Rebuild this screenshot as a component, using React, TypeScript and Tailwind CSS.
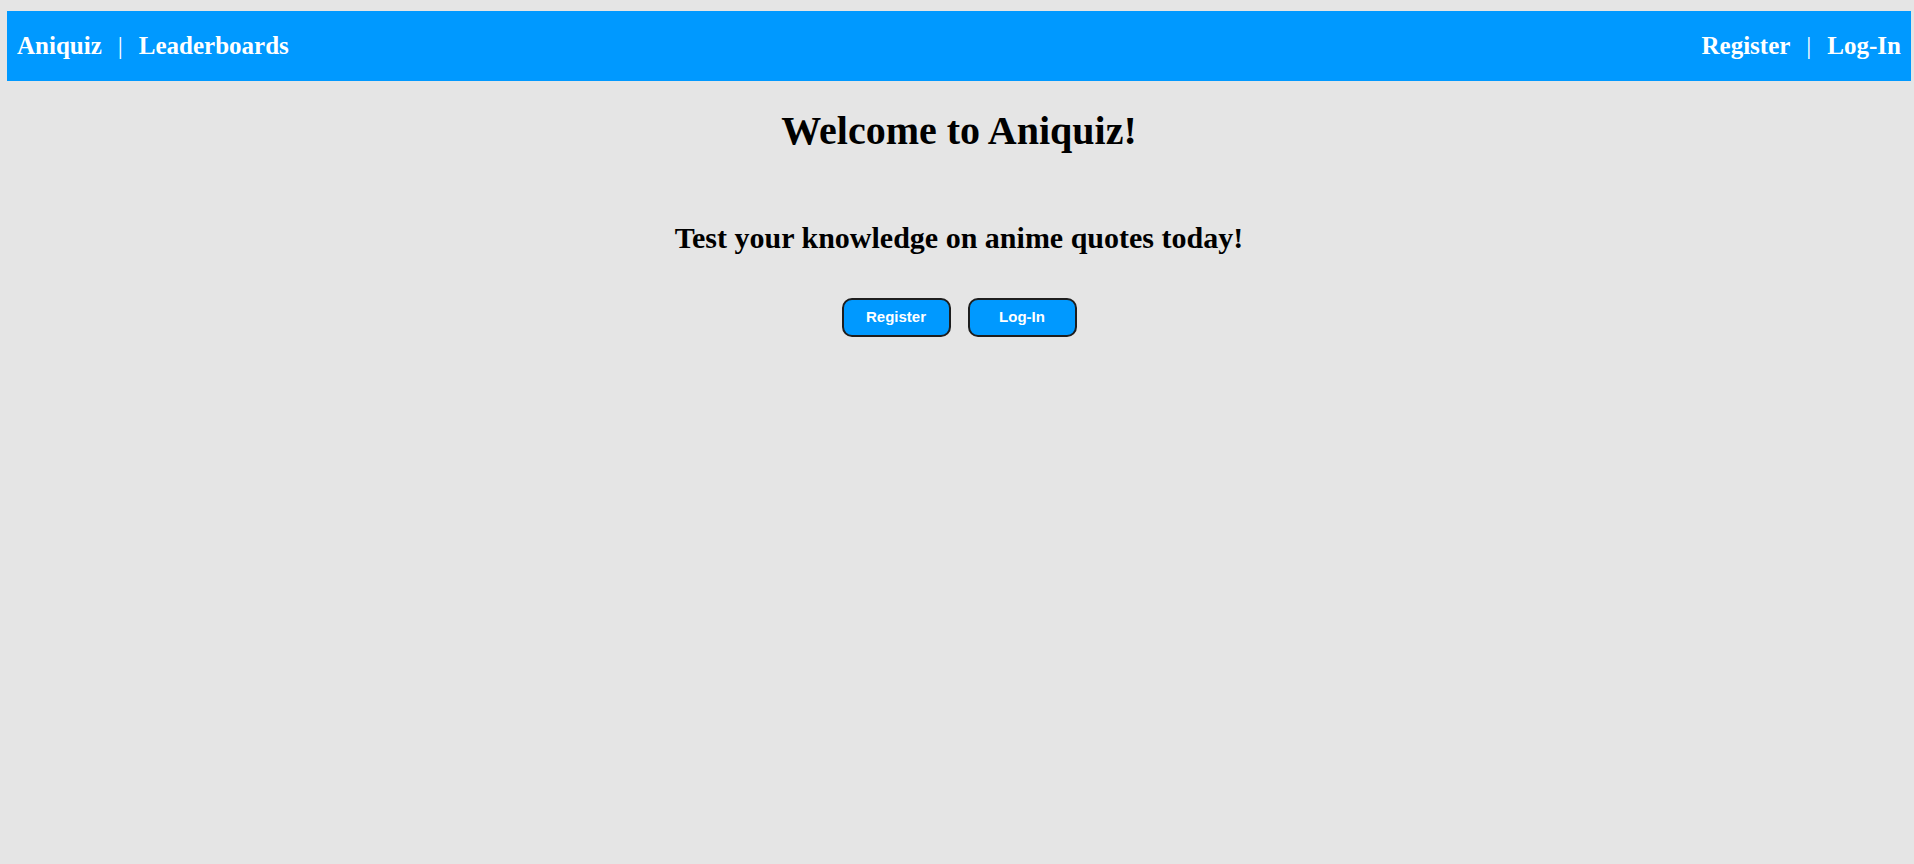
import React from "react";

const serif = { fontFamily: '"Liberation Serif", "Times New Roman", serif' };

export default function App() {
  return (
    <div className="min-h-screen w-full bg-[#e5e5e5] pt-[11px] pl-[7px] pr-[3px]" style={serif}>
      <nav className="h-[70px] bg-[#0099ff] flex items-center justify-between px-[10px] pb-[1px] text-white font-bold text-[25px] leading-[25px]">
        <div className="flex items-center">
          <span>Aniquiz</span>
          <span className="mx-[16px] font-normal">|</span>
          <span>Leaderboards</span>
        </div>
        <div className="flex items-center">
          <span>Register</span>
          <span className="mx-[16px] font-normal">|</span>
          <span>Log-In</span>
        </div>
      </nav>
      <main className="flex flex-col items-center">
        <h1 className="mt-[30px] text-[40px] leading-[40px] font-bold text-black">Welcome to Aniquiz!</h1>
        <h2 className="mt-[72px] text-[30px] leading-[30px] font-bold text-black">Test your knowledge on anime quotes today!</h2>
        <div className="mt-[45px] flex gap-[17px]" style={{ fontFamily: '"Liberation Sans", Arial, sans-serif' }}>
          <button className="w-[109px] h-[39px] rounded-[10px] border-2 border-[#1e1e1e] bg-[#0099ff] text-white font-bold text-[15px] flex items-center justify-center">
            Register
          </button>
          <button className="w-[109px] h-[39px] rounded-[10px] border-2 border-[#1e1e1e] bg-[#0099ff] text-white font-bold text-[15px] flex items-center justify-center">
            Log-In
          </button>
        </div>
      </main>
    </div>
  );
}
